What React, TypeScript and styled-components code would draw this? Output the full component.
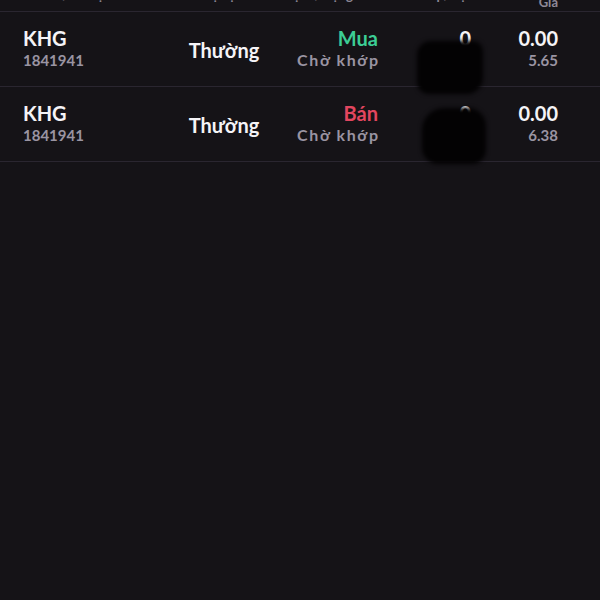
import React, { FC } from 'react';
import styled, { createGlobalStyle } from 'styled-components';

interface IOrder {
  id: string;
  symbol: string;
  orderNo: string;
  kind: string;
  side: 'buy' | 'sell';
  status: string;
  qty: string;
  matchedPrice: string;
  price: string;
}

const orders: IOrder[] = [
  {
    id: '1',
    symbol: 'KHG',
    orderNo: '1841941',
    kind: 'Thường',
    side: 'buy',
    status: 'Chờ khớp',
    qty: '0',
    matchedPrice: '0.00',
    price: '5.65'
  },
  {
    id: '2',
    symbol: 'KHG',
    orderNo: '1841941',
    kind: 'Thường',
    side: 'sell',
    status: 'Chờ khớp',
    qty: '0',
    matchedPrice: '0.00',
    price: '6.38'
  }
];

// redaction blobs painted over the screenshot
const blobs = [
  { left: 417, top: 41, width: 66, height: 53, radius: '14px 10px 16px 12px' },
  { left: 422, top: 108, width: 64, height: 56, radius: '22px 18px 14px 16px' }
];

const App: FC = () => {
  return (
    <>
      <GlobalStyle />
      <Screen>
        <HeaderRow>
          <HeaderLabel $align="left" $offset={9}>Mã CK/Số hiệu</HeaderLabel>
          <HeaderLabel $align="center" $offset={9}>Loại lệnh</HeaderLabel>
          <HeaderLabel $align="right" $offset={9}>Lệnh/Trạng thái</HeaderLabel>
          <HeaderLabel $align="right" $offset={9}>KL khớp/Đặt</HeaderLabel>
          <HeaderLabel $align="right" $offset={2}>Giá</HeaderLabel>
        </HeaderRow>
        <List>
          {orders.map((order) => (
            <OrderRow key={order.id}>
              <Cell $align="left">
                <MainText>{order.symbol}</MainText>
                <SubText>{order.orderNo}</SubText>
              </Cell>
              <KindCell>{order.kind}</KindCell>
              <Cell $align="right">
                <SideText $side={order.side}>{order.side === 'buy' ? 'Mua' : 'Bán'}</SideText>
                <StatusText>{order.status}</StatusText>
              </Cell>
              <Cell $align="right">
                <MainText>{order.qty}</MainText>
              </Cell>
              <Cell $align="right">
                <MainText>{order.matchedPrice}</MainText>
                <SubText>{order.price}</SubText>
              </Cell>
            </OrderRow>
          ))}
          {blobs.map((b, i) => (
            <Redaction
              key={i}
              style={{ left: b.left, top: b.top - 12, width: b.width, height: b.height, borderRadius: b.radius }}
            />
          ))}
        </List>
      </Screen>
    </>
  );
};

export default App;

const GlobalStyle = createGlobalStyle`
  html, body {
    margin: 0;
    padding: 0;
    background: #151317;
  }
  body {
    font-family: Lato, "Noto Sans", sans-serif;
    -webkit-font-smoothing: antialiased;
  }
`;

const Screen = styled.div`
  width: 600px;
  height: 600px;
  background: #151317;
  overflow: hidden;
`;

const columns = `
  display: grid;
  grid-template-columns: 147px 108px 100px 93px 87px;
  padding: 0 42px 0 23px;
`;

const HeaderRow = styled.div`
  ${columns}
  box-sizing: border-box;
  height: 12px;
  grid-template-rows: 11px;
  overflow: hidden;
  align-items: end;
  border-bottom: 1px solid #2a2630;
`;

const HeaderLabel = styled.span<{ $align: string; $offset: number }>`
  display: block;
  font-size: 13px;
  line-height: 14px;
  height: 14px;
  font-weight: 700;
  color: #8f8997;
  white-space: nowrap;
  text-align: ${({ $align }) => $align};
  transform: translateY(-${({ $offset }) => $offset}px);
`;

const List = styled.div`
  position: relative;
`;

const OrderRow = styled.div`
  ${columns}
  box-sizing: border-box;
  height: 75px;
  padding-top: 16px;
  border-bottom: 1px solid #2a2630;
  align-items: start;
`;

const Cell = styled.div<{ $align: string }>`
  display: flex;
  flex-direction: column;
  align-items: ${({ $align }) => ($align === 'right' ? 'flex-end' : 'flex-start')};
  gap: 1px;
`;

const MainText = styled.span`
  font-size: 20px;
  line-height: 21px;
  font-weight: 700;
  color: #f5f4f7;
`;

const SubText = styled.span`
  font-size: 15px;
  line-height: 20px;
  font-weight: 700;
  color: #9a94a2;
`;

const StatusText = styled(SubText)`
  font-size: 16px;
  letter-spacing: 1.6px;
  margin-right: -1.6px;
`;

const KindCell = styled.div`
  align-self: center;
  margin-top: -14px;
  text-align: center;
  font-size: 20px;
  font-weight: 700;
  color: #f5f4f7;
`;

const SideText = styled(MainText)<{ $side: 'buy' | 'sell' }>`
  color: ${({ $side }) => ($side === 'buy' ? '#3ccd95' : '#e2465f')};
`;

const Redaction = styled.div`
  position: absolute;
  background: #030203;
  filter: blur(2px);
`;
